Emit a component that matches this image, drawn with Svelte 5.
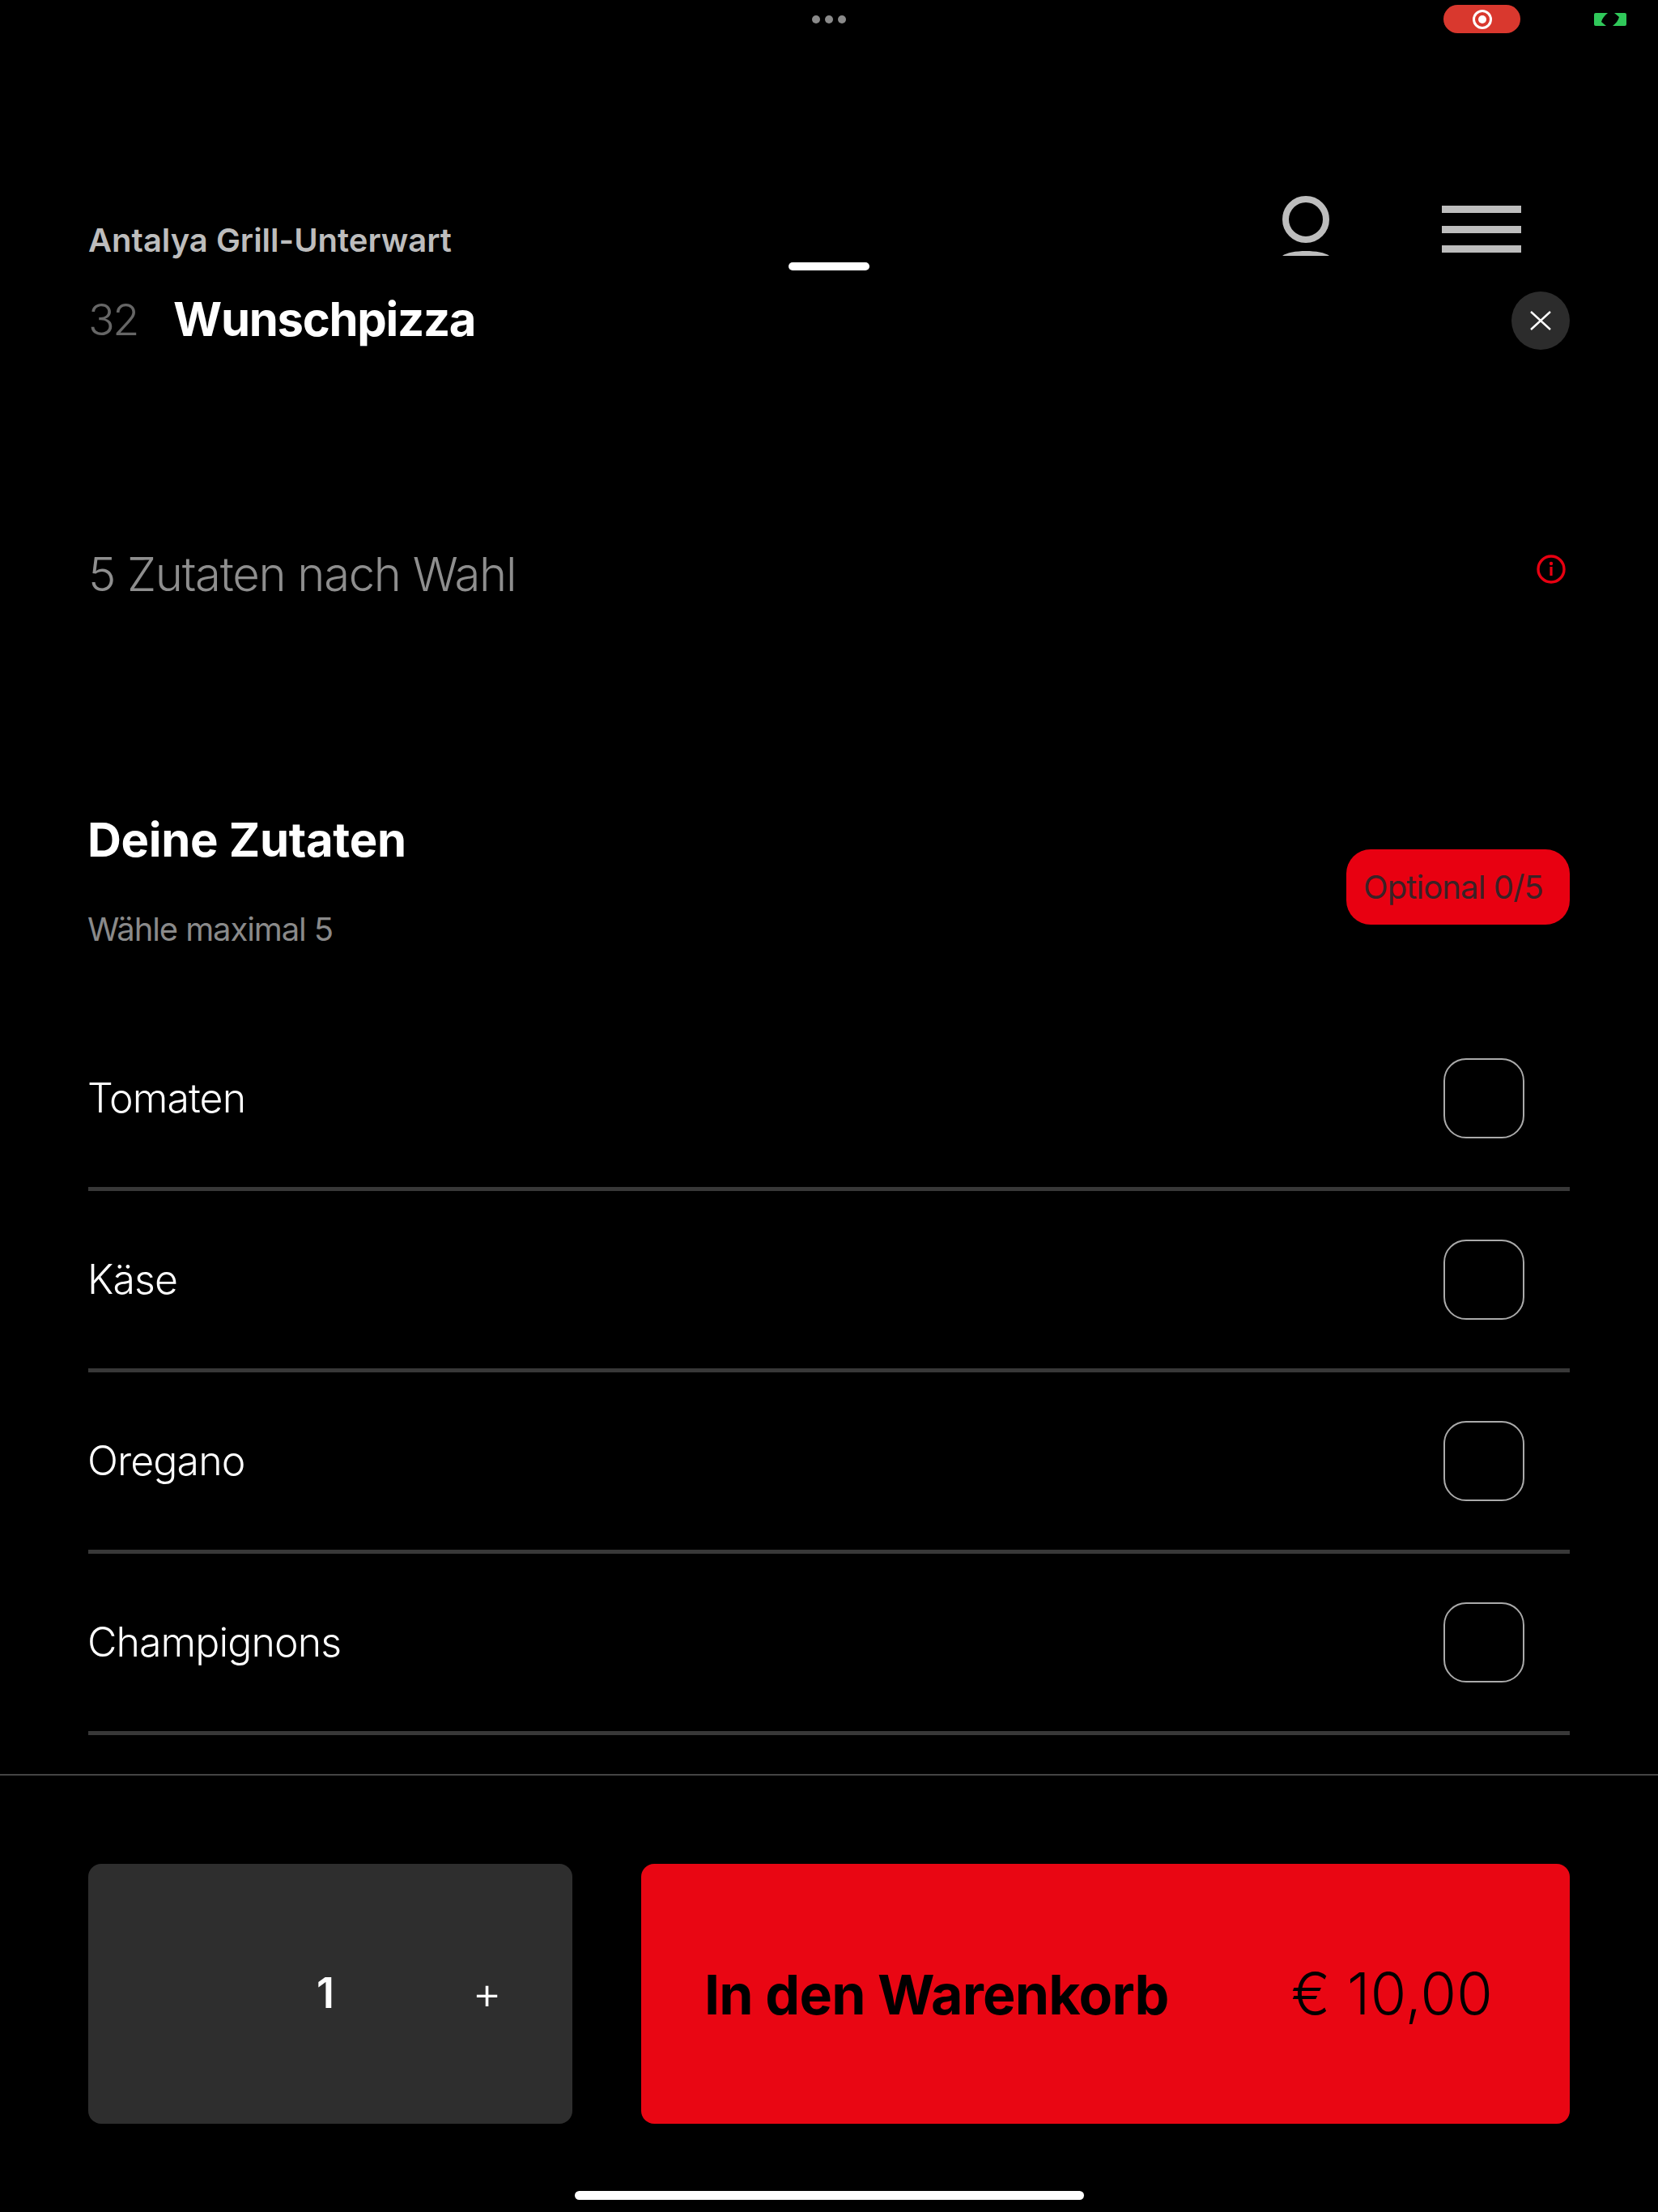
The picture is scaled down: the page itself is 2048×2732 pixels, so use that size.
<script>
  const ingredients = ['Tomaten', 'Käse', 'Oregano', 'Champignons'];
</script>

<div class="page">
  <div class="status">
    <span></span>
    <div class="dots"><i></i><i></i><i></i></div>
    <div class="status-right">
      <div class="record">
        <svg width="26" height="26" viewBox="0 0 26 26">
          <circle cx="13" cy="13" r="10.5" fill="none" stroke="#fff" stroke-width="3" />
          <circle cx="13" cy="13" r="5" fill="#fff" />
        </svg>
      </div>
      <svg class="camera" width="40" height="16" viewBox="0 0 40 16">
        <path d="M2 0H17C13 3 10 7 9 11L15 16H2Q0 16 0 14V2Q0 0 2 0Z" fill="#30c85a" />
        <path d="M38 16H23C27 13 30 9 31 5L25 0H38Q40 0 40 2V14Q40 16 38 16Z" fill="#30c85a" />
      </svg>
    </div>
  </div>

  <header class="app-header">
    <div class="restaurant">Antalya Grill-Unterwart</div>
    <svg class="user" width="58" height="74" viewBox="0 0 58 74">
      <circle cx="29" cy="29" r="25" fill="none" stroke="#bdbdbd" stroke-width="8" />
      <path d="M0 74C10 66 48 66 58 74Z" fill="#bdbdbd" />
    </svg>
    <div class="burger"><i></i><i></i><i></i></div>
  </header>

  <div class="handle"></div>

  <div class="title-row">
    <span class="number">32</span>
    <h1>Wunschpizza</h1>
    <button class="close" aria-label="Schließen">
      <svg width="26" height="24" viewBox="0 0 26 24">
        <path d="M1 1L25 23M25 1L1 23" stroke="#fff" stroke-width="2.4" fill="none" />
      </svg>
    </button>
  </div>

  <div class="intro">
    <p>5 Zutaten nach Wahl</p>
    <svg width="36" height="36" viewBox="0 0 36 36">
      <circle cx="18" cy="18" r="16" fill="none" stroke="#e80011" stroke-width="3.4" />
      <circle cx="18" cy="11" r="2.2" fill="#e80011" />
      <rect x="16.4" y="15" width="3.2" height="11" fill="#e80011" />
    </svg>
  </div>

  <section class="section-head">
    <div>
      <h2>Deine Zutaten</h2>
      <p>Wähle maximal 5</p>
    </div>
    <span class="badge">Optional 0/5</span>
  </section>

  <ul class="list">
    {#each ingredients as name}
      <li>
        <span class="name">{name}</span>
        <span class="check"></span>
      </li>
    {/each}
  </ul>

  <footer>
    <div class="stepper">
      <span></span>
      <span class="qty">1</span>
      <span class="plus">+</span>
    </div>
    <button class="cta">
      <strong>In den Warenkorb</strong>
      <span>€ 10,00</span>
    </button>
  </footer>

  <div class="home"></div>
</div>

<style>
  :global(body) {
    background: #000;
  }

  .page {
    position: relative;
    width: 2048px;
    height: 2732px;
    overflow: hidden;
    background: #000;
    color: #fff;
    font-family: Inter, "Liberation Sans", sans-serif;
    display: flex;
    flex-direction: column;
  }

  .status {
    display: grid;
    grid-template-columns: 1fr auto 1fr;
    align-items: center;
    height: 35px;
    margin-top: 6px;
  }

  .dots {
    display: flex;
    gap: 6px;
  }

  .dots i {
    width: 10px;
    height: 10px;
    border-radius: 50%;
    background: #8a8a8a;
  }

  .status-right {
    display: flex;
    justify-content: flex-end;
    align-items: center;
    gap: 91px;
    padding-right: 39px;
  }

  .record {
    width: 95px;
    height: 35px;
    border-radius: 18px;
    background: #d9382e;
    display: flex;
    align-items: center;
    justify-content: center;
  }

  .app-header {
    display: flex;
    align-items: flex-end;
    height: 74px;
    margin-top: 201px;
    padding: 0 169px 0 109px;
  }

  .restaurant {
    flex: 1;
    font-size: 40px;
    font-weight: 600;
    line-height: 48px;
    color: #bdbdbd;
    margin-bottom: -5px;
  }

  .burger {
    display: flex;
    flex-direction: column;
    gap: 15.5px;
    width: 98px;
    margin-left: 139px;
    margin-bottom: 4px;
  }

  .burger i {
    height: 9px;
    background: #bdbdbd;
  }

  .handle {
    position: absolute;
    left: 974px;
    top: 324px;
    width: 100px;
    height: 10px;
    border-radius: 5px;
    background: #fff;
  }

  .title-row {
    display: flex;
    align-items: center;
    height: 72px;
    margin-top: 44px;
    padding: 0 109px 0 109px;
  }

  .number {
    width: 105px;
    font-size: 54px;
    font-weight: 300;
    letter-spacing: -2.5px;
    color: #666;
    margin-top: -3px;
  }

  h1 {
    flex: 1;
    margin: -5px 0 0;
    font-size: 58px;
    font-weight: 700;
    letter-spacing: -1.3px;
  }

  .close {
    width: 72px;
    height: 72px;
    padding: 0;
    border: none;
    border-radius: 50%;
    background: #2c2c2c;
    display: flex;
    align-items: center;
    justify-content: center;
  }

  .intro {
    display: flex;
    align-items: center;
    justify-content: space-between;
    height: 60px;
    margin-top: 241px;
    padding: 0 114px 0 109px;
  }

  .intro p {
    margin: 12px 0 0;
    font-size: 58px;
    font-weight: 350;
    letter-spacing: -1.3px;
    color: #8e8e8e;
  }

  .section-head {
    display: flex;
    justify-content: space-between;
    margin-top: 269px;
    padding: 0 109px 0 108px;
  }

  h2 {
    margin: 0;
    font-size: 58px;
    line-height: 70px;
    font-weight: 700;
    letter-spacing: -0.3px;
  }

  .section-head p {
    margin: 52px 0 0;
    font-size: 40px;
    line-height: 48px;
    letter-spacing: -1.1px;
    color: #8a8a8a;
  }

  .badge {
    align-self: flex-end;
    margin-bottom: 30px;
    width: 276px;
    height: 93px;
    box-sizing: border-box;
    padding-left: 21px;
    border-radius: 30px;
    background: #e80011;
    color: #3a2226;
    font-size: 40px;
    letter-spacing: -0.9px;
    line-height: 93px;
  }

  .list {
    list-style: none;
    margin: 75px 0 0;
    padding: 0 109px;
  }

  .list li {
    display: flex;
    align-items: center;
    justify-content: space-between;
    height: 219px;
    padding-right: 56px;
    border-bottom: 5px solid #383838;
    font-size: 50px;
    font-weight: 350;
    letter-spacing: -0.9px;
  }

  .name {
    margin: -2px 0 0 -1px;
  }

  .check {
    width: 100px;
    height: 99px;
    box-sizing: border-box;
    border: 2px solid #aaa;
    border-radius: 28px;
  }

  footer {
    display: flex;
    gap: 85px;
    margin-top: 48px;
    padding: 109px 109px 0;
    border-top: 2px solid #444;
  }

  .stepper {
    display: grid;
    grid-template-columns: repeat(3, 1fr);
    align-items: center;
    justify-items: center;
    width: 598px;
    height: 321px;
    box-sizing: border-box;
    padding-right: 10px;
    border-radius: 16px;
    background: #2e2e2e;
  }

  .qty {
    font-size: 52px;
    font-weight: 600;
    margin: -3px 2px 0 0;
  }

  .plus {
    font-size: 56px;
    font-weight: 300;
    margin: -3px 0 0 5px;
  }

  .cta {
    flex: 1;
    height: 321px;
    padding: 0 95px 0 78px;
    border: none;
    border-radius: 16px;
    background: #e90613;
    color: #000;
    font-family: inherit;
    display: flex;
    align-items: center;
    justify-content: space-between;
  }

  .cta strong {
    font-size: 68px;
    font-weight: 700;
    letter-spacing: -0.75px;
  }

  .cta span {
    font-size: 72px;
    font-weight: 300;
    letter-spacing: 0.3px;
    margin-top: -2px;
  }

  .home {
    width: 629px;
    height: 11px;
    margin: 83px auto 0;
    border-radius: 6px;
    background: #fff;
  }
</style>
